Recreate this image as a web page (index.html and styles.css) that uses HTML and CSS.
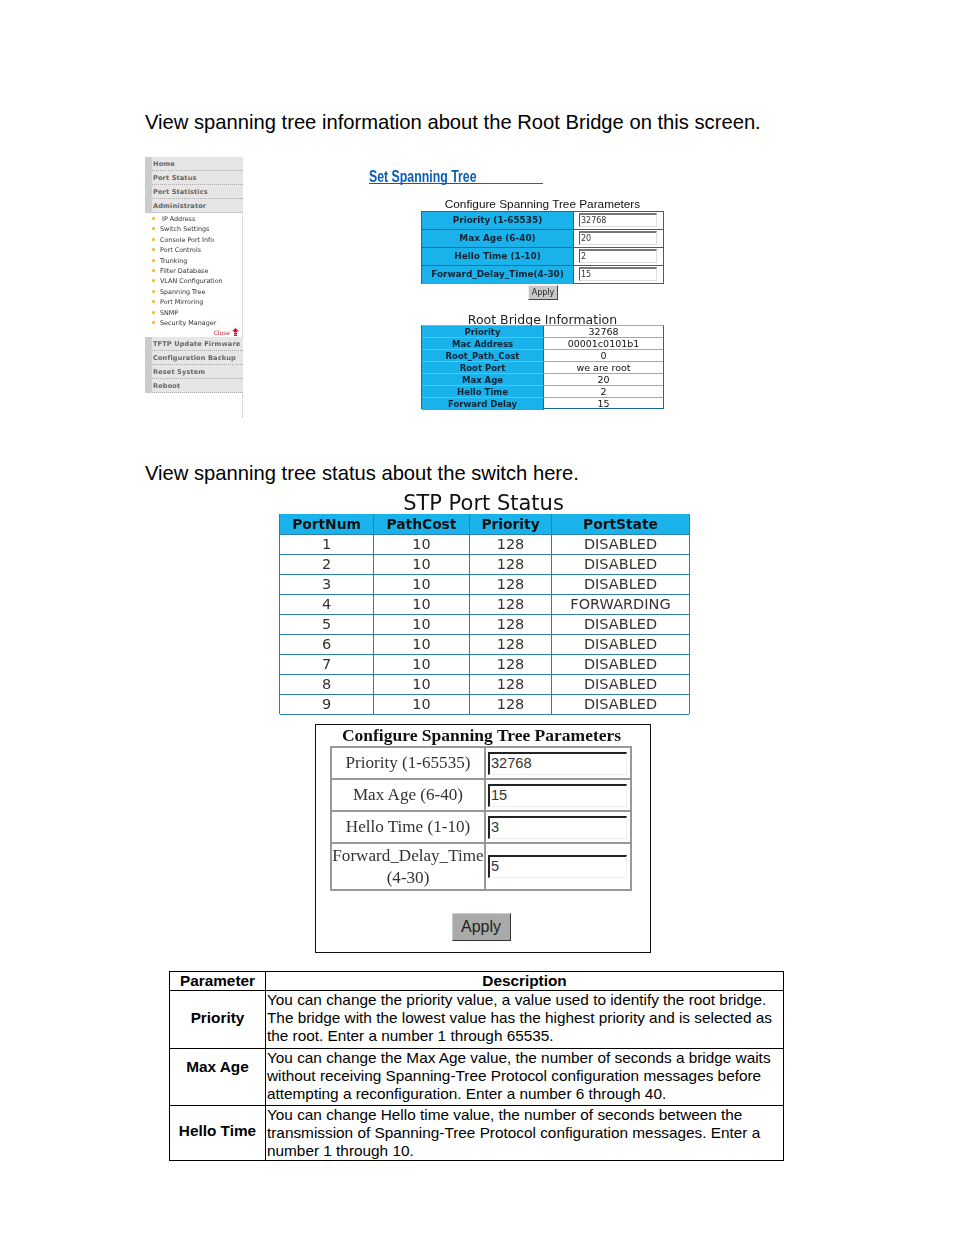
FILE: index.html
```html
<!DOCTYPE html>
<html lang="en">
<head>
<meta charset="utf-8">
<title>Spanning Tree</title>
<link rel="stylesheet" href="styles.css">
</head>
<body>
<main class="page">
  <p class="lead lead-first">View spanning tree information about the Root Bridge on this screen.</p>

  <section class="shot">
    <nav class="side">
      <div class="side-group">
        <div class="side-item">Home</div>
        <div class="side-item">Port Status</div>
        <div class="side-item">Port Statistics</div>
        <div class="side-item">Administrator</div>
      </div>
      <ul class="side-list">
        <li>&nbsp;IP Address</li>
        <li>Switch Settings</li>
        <li>Console Port Info</li>
        <li>Port Controls</li>
        <li>Trunking</li>
        <li>Filter Database</li>
        <li>VLAN Configuration</li>
        <li>Spanning Tree</li>
        <li>Port Mirroring</li>
        <li>SNMP</li>
        <li>Security Manager</li>
      </ul>
      <div class="side-close">Close
        <svg class="close-icon" width="7" height="9" viewBox="0 0 7 9"><path d="M3.5 0 7 3.2H0z M2 3.2h3v1.2H2z M2 5h3v1.2H2z M2 6.8h3V8H2z" fill="#c8102e"/></svg>
      </div>
      <div class="side-group">
        <div class="side-item">TFTP Update Firmware</div>
        <div class="side-item">Configuration Backup</div>
        <div class="side-item">Reset System</div>
        <div class="side-item">Reboot</div>
      </div>
    </nav>
    <div class="shot-main">
      <h2 class="set-title"><span>Set Spanning Tree</span></h2>
      <div class="panel">
        <div class="cap-small">Configure Spanning Tree Parameters</div>
        <div class="blue-form">
          <div class="bf-label">Priority (1-65535)</div><div class="bf-cell"><span class="bf-input">32768</span></div>
          <div class="bf-label">Max Age (6-40)</div><div class="bf-cell"><span class="bf-input">20</span></div>
          <div class="bf-label">Hello Time (1-10)</div><div class="bf-cell"><span class="bf-input">2</span></div>
          <div class="bf-label">Forward_Delay_Time(4-30)</div><div class="bf-cell"><span class="bf-input">15</span></div>
        </div>
        <div class="apply-row"><span class="apply-small">Apply</span></div>
        <div class="cap-root">Root Bridge Information</div>
        <div class="root-table">
          <div class="rt-label">Priority</div><div class="rt-val">32768</div>
          <div class="rt-label">Mac Address</div><div class="rt-val">00001c0101b1</div>
          <div class="rt-label">Root_Path_Cost</div><div class="rt-val">0</div>
          <div class="rt-label">Root Port</div><div class="rt-val">we are root</div>
          <div class="rt-label">Max Age</div><div class="rt-val">20</div>
          <div class="rt-label">Hello Time</div><div class="rt-val">2</div>
          <div class="rt-label">Forward Delay</div><div class="rt-val">15</div>
        </div>
      </div>
    </div>
  </section>

  <p class="lead lead-second">View spanning tree status about the switch here.</p>

  <section class="stp">
    <div class="stp-title">STP Port Status</div>
    <div class="stp-table">
      <div class="stp-head">PortNum</div><div class="stp-head">PathCost</div><div class="stp-head">Priority</div><div class="stp-head">PortState</div>
      <div>1</div><div>10</div><div>128</div><div>DISABLED</div>
      <div>2</div><div>10</div><div>128</div><div>DISABLED</div>
      <div>3</div><div>10</div><div>128</div><div>DISABLED</div>
      <div>4</div><div>10</div><div>128</div><div>FORWARDING</div>
      <div>5</div><div>10</div><div>128</div><div>DISABLED</div>
      <div>6</div><div>10</div><div>128</div><div>DISABLED</div>
      <div>7</div><div>10</div><div>128</div><div>DISABLED</div>
      <div>8</div><div>10</div><div>128</div><div>DISABLED</div>
      <div>9</div><div>10</div><div>128</div><div>DISABLED</div>
    </div>
  </section>

  <section class="cfg">
    <div class="cfg-title">Configure Spanning Tree Parameters</div>
    <div class="cfg-table">
      <div class="cfg-label">Priority (1-65535)</div><div class="cfg-cell"><span class="cfg-input">32768</span></div>
      <div class="cfg-label">Max Age (6-40)</div><div class="cfg-cell"><span class="cfg-input">15</span></div>
      <div class="cfg-label">Hello Time (1-10)</div><div class="cfg-cell"><span class="cfg-input">3</span></div>
      <div class="cfg-label">Forward_Delay_Time<br>(4-30)</div><div class="cfg-cell"><span class="cfg-input">5</span></div>
    </div>
    <div class="cfg-apply"><span class="cfg-btn">Apply</span></div>
  </section>

  <table class="desc">
    <colgroup><col class="desc-c1"><col></colgroup>
    <thead>
      <tr class="desc-r0"><th>Parameter</th><th>Description</th></tr>
    </thead>
    <tbody>
      <tr class="desc-r1"><th>Priority</th><td>You can change the priority value, a value used to identify the root bridge. The bridge with the lowest value has the highest priority and is selected as the root. Enter a number 1 through 65535.</td></tr>
      <tr class="desc-r2"><th class="desc-up">Max Age</th><td>You can change the Max Age value, the number of seconds a bridge waits without receiving Spanning-Tree Protocol configuration messages before attempting a reconfiguration. Enter a number 6 through 40.</td></tr>
      <tr class="desc-r3"><th>Hello Time</th><td>You can change Hello time value, the number of seconds between the transmission of Spanning-Tree Protocol configuration messages. Enter a number 1 through 10.</td></tr>
    </tbody>
  </table>
</main>
</body>
</html>
```

FILE: styles.css
```css
* { box-sizing: border-box; }
html, body { margin: 0; padding: 0; background: #fff; }
body { width: 954px; height: 1235px; overflow: hidden; font-family: "Liberation Sans", Arial, sans-serif; color: #000; }
.page { padding: 110px 0 0 145px; width: 954px; }
.lead { margin: 0; font-size: 20.2px; line-height: 25px; height: 25px; white-space: nowrap; }
.lead-first { margin-bottom: 22px; }
.lead-second { margin-top: 44px; }

/* first screenshot */
.shot { display: flex; height: 260px; }
.side { width: 98px; height: 260px; border-right: 1px dotted #bbb; font-family: "DejaVu Sans", sans-serif; filter: blur(0.35px); }
.side-item { height: 14px; line-height: 15px; padding-left: 1px; border-left: 7px solid #ccc; margin-right: -1px; background: #e6e6e6; border-bottom: 1px dotted #aaa; font-size: 6.6px; font-weight: bold; color: #666; letter-spacing: 0.12px; white-space: nowrap; overflow: hidden; }
.side-list { list-style: none; margin: 0; padding: 0; }
.side-list li { position: relative; height: 10.4px; line-height: 12px; padding-left: 15px; font-size: 6.4px; color: #333; white-space: nowrap; }
.side-list li::before { content: ""; position: absolute; left: 7px; top: 4px; width: 3px; height: 3px; background: #fbb117; border-radius: 50%; }
.side-close { height: 10px; display: flex; justify-content: flex-end; align-items: center; gap: 2px; padding-right: 3px; font-size: 6px; color: #d0223f; }
.close-icon { display: block; }
.shot-main { width: 0; flex: none; }
.set-title { margin: 13px 0 0 126px; width: 174px; height: 14px; border-bottom: 1px solid #555; font: bold 16px/14px "Liberation Sans", sans-serif; color: #0a5fb4; white-space: nowrap; }
.set-title span { display: inline-block; border-bottom: 1px solid #0a5fb4; height: 14px; transform: scaleX(0.77); transform-origin: left center; }
.panel { margin: 13px 0 0 178px; width: 243px; filter: blur(0.25px); }
.cap-small { height: 14px; line-height: 14px; text-align: center; font-size: 11.8px; color: #111; white-space: nowrap; }
.blue-form { display: grid; grid-template-columns: 152px 89px; grid-auto-rows: 18px; border: 1px solid #1b6a9c; height: 73px; }
.bf-label { background: #1ab2ea; border-bottom: 1px solid #1b6a9c; border-right: 1px solid #1b6a9c; text-align: center; font: bold 8.9px/17px "DejaVu Sans", sans-serif; color: #123; white-space: nowrap; }
.bf-cell { border-bottom: 1px solid #1b6a9c; padding: 1px 0 0 5px; }
.bf-label:nth-last-child(2), .bf-cell:last-child { border-bottom: 0; }
.bf-input { display: block; width: 78px; height: 14px; border: 1px solid #ddd; border-top: 2px solid #777; border-left: 1px solid #555; font: 8px/11px "DejaVu Sans", sans-serif; padding-left: 1px; color: #333; }
.apply-row { height: 28px; padding: 1px 0 0 107px; }
.apply-small { display: block; width: 30px; height: 15px; background: #c8c8c8; border: 1px solid; border-color: #eee #444 #444 #eee; text-align: center; font: 8px/13px "DejaVu Sans", sans-serif; color: #222; }
.cap-root { height: 13px; text-align: center; font: 12.5px/15px "DejaVu Sans", sans-serif; color: #222; white-space: nowrap; }
.root-table { display: grid; grid-template-columns: 122px 119px; grid-auto-rows: 12px; height: 84px; border-top: 1px solid #7fb3cf; border-left: 1px solid #1b6a9c; border-right: 1px solid #1b6a9c; border-bottom: 1px solid #1b6a9c; }
.rt-label { background: #1ab2ea; border-bottom: 1px solid #7fb3cf; border-right: 1px solid #1b6a9c; text-align: center; font: bold 8.5px/12px "DejaVu Sans", sans-serif; color: #123; white-space: nowrap; }
.rt-val { border-bottom: 1px solid #7fb3cf; text-align: center; font: 9.5px/12px "DejaVu Sans", sans-serif; color: #111; white-space: nowrap; }
.rt-label:nth-last-child(2), .rt-val:last-child { border-bottom: 0; }

/* STP table */
.stp { margin: 7px 0 0 134px; width: 411px; filter: blur(0.3px); }
.stp-title { height: 21px; text-align: center; font: 21px/21px "DejaVu Sans", sans-serif; color: #111; padding-right: 2px; }
.stp-table { display: grid; grid-template-columns: 94px 96px 82px 137px; grid-auto-rows: 20px; height: 200px; border: 1px solid #2d7fb0; border-width: 1px 1px 0 1px; }
.stp-table > div { border-bottom: 1px solid #2d7fb0; border-right: 1px solid #2d7fb0; text-align: center; font-size: 14.5px; line-height: 20px; font-family: "DejaVu Sans", sans-serif; color: #333; margin-top: -1px; height: 21px; }
.stp-table > div:nth-child(4n) { border-right: 0; }
.stp-table > .stp-head { background: #1ab2ea; font-weight: bold; font-size: 13.8px; color: #111; }

/* screenshot config */
.cfg { margin: 10px 0 0 170px; width: 336px; height: 229px; border: 1px solid #111; font-family: "Liberation Serif", serif; }
.cfg-title { height: 21px; text-align: center; font-size: 17.5px; font-weight: bold; line-height: 21px; color: #111; white-space: nowrap; padding-right: 3px; filter: blur(0.25px); }
.cfg-table { display: grid; grid-template-columns: 154px 144px; grid-template-rows: 32px 32px 32px 45px; width: 302px; height: 145px; margin-left: 14px; border: 2px solid #999; }
.cfg-label { border-right: 2px solid #999; border-bottom: 2px solid #999; text-align: center; font-size: 17.1px; line-height: 22px; color: #333; display: flex; align-items: center; justify-content: center; white-space: nowrap; filter: blur(0.25px); }
.cfg-cell { border-bottom: 2px solid #999; display: flex; align-items: center; padding-left: 2px; }
.cfg-label:nth-last-child(2), .cfg-cell:last-child { border-bottom: 0; }
.cfg-input { display: block; width: 139px; height: 23px; border: 1px solid #eee; border-top: 2px solid #222; border-left: 2px solid #222; font: 14.6px/19px "Liberation Sans", sans-serif; color: #333; padding-left: 1px; }
.cfg-apply { display: flex; justify-content: center; padding: 22px 4px 0 0; }
.cfg-btn { display: block; width: 59px; height: 28px; background: #aaa; border: 1px solid; border-color: #ccc #333 #333 #ccc; text-align: center; font: 16px/26px "Liberation Sans", sans-serif; color: #222; }

/* description */
.desc { margin: 18px 0 0 24px; width: 615px; height: 189px; border-collapse: collapse; table-layout: fixed; font-size: 15.35px; line-height: 18px; }
.desc-c1 { width: 96px; }
.desc th, .desc td { border: 1px solid #000; padding: 0 1px; }
.desc th { text-align: center; font-weight: bold; vertical-align: middle; padding-bottom: 4px; }
.desc td { text-align: left; vertical-align: top; }
.desc-r0 { height: 19px; }
.desc-r0 th { padding-bottom: 0; }
.desc-r1 { height: 58px; }
.desc-r2 { height: 57px; }
.desc-r3 { height: 55px; }
.desc .desc-up { padding-bottom: 20px; }
```
